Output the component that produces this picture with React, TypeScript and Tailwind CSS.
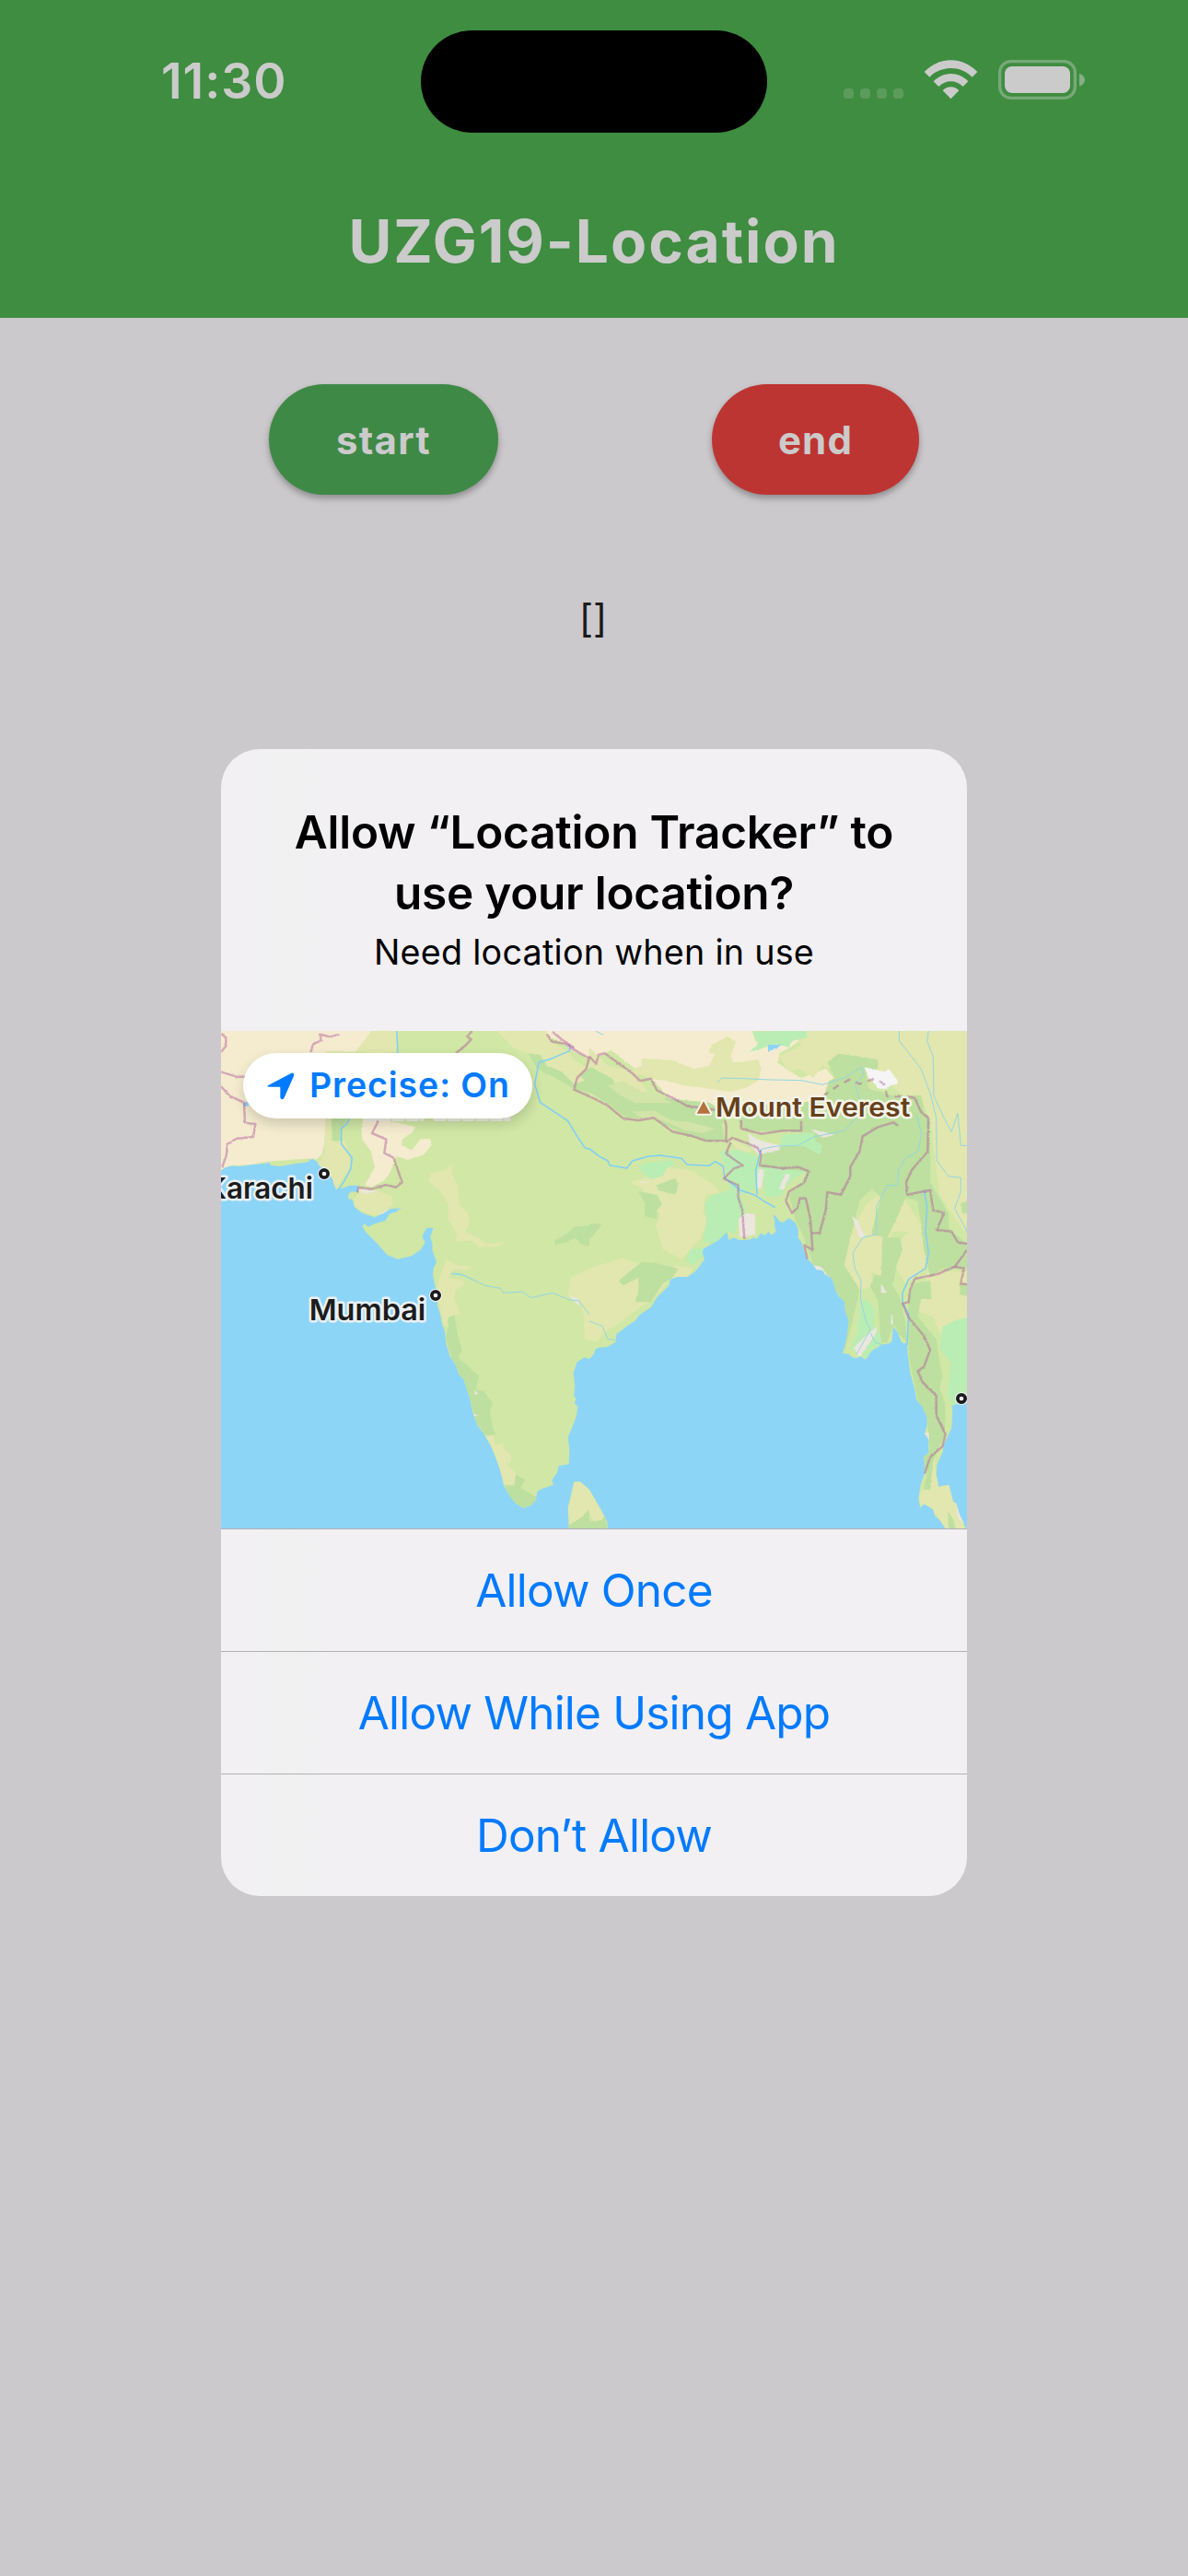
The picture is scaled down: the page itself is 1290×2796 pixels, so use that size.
const LAND =
  "30,20 30,482 42,472 65,466 90,468 130,462 180,458 185,452 192,464 220,468 270,460 315,454 318,446 330,444 342,452 350,465 380,490 395,512 397,525 405,543 430,538 450,530 478,530 474,552 452,550 445,560 444,574 458,576 465,600 490,620 530,634 560,620 582,606 618,604 596,618 580,622 565,645 530,655 510,665 498,655 490,662 500,680 540,720 570,755 605,770 650,760 680,740 695,715 686,700 688,690 700,668 722,668 716,684 712,700 718,716 718,740 725,760 732,780 722,800 720,820 725,850 735,885 735,920 744,950 750,980 760,1010 762,1040 775,1085 795,1115 805,1145 820,1160 830,1190 840,1220 850,1270 865,1310 890,1345 910,1380 930,1430 943,1470 950,1505 970,1540 990,1565 1015,1580 1040,1572 1055,1556 1060,1528 1070,1520 1090,1513 1113,1505 1108,1490 1125,1465 1130,1443 1163,1438 1165,1390 1160,1350 1175,1315 1188,1280 1192,1250 1182,1240 1186,1225 1180,1215 1183,1180 1178,1140 1190,1105 1215,1090 1230,1095 1244,1080 1250,1063 1260,1058 1290,1055 1315,1040 1318,1015 1350,990 1380,970 1395,950 1430,928 1450,895 1490,855 1493,835 1515,828 1550,828 1575,810 1590,792 1605,770 1598,750 1602,735 1620,726 1650,708 1678,682 1684,708 1700,700 1718,708 1730,708 1755,706 1765,700 1775,704 1790,685 1800,694 1814,680 1822,692 1838,680 1832,655 1835,650 1828,625 1835,628 1850,648 1862,650 1880,636 1900,650 1910,672 1910,700 1922,718 1930,745 1940,770 1952,780 1970,804 1990,806 1998,820 2018,830 2025,845 2032,870 2045,895 2060,905 2064,940 2075,970 2072,1000 2068,1030 2055,1078 2072,1078 2086,1090 2100,1093 2112,1086 2130,1097 2150,1068 2185,1048 2205,1045 2215,1038 2220,990 2235,1010 2244,1035 2250,1043 2265,1045 2267,1080 2275,1140 2290,1195 2296,1230 2315,1250 2330,1285 2330,1310 2322,1340 2335,1355 2335,1400 2318,1416 2322,1430 2322,1470 2310,1500 2302,1550 2308,1580 2320,1567 2350,1585 2356,1607 2370,1618 2392,1650 2458,1650 2445,1620 2435,1600 2425,1565 2415,1560 2410,1540 2402,1505 2380,1508 2368,1512 2360,1470 2362,1440 2382,1395 2384,1375 2400,1340 2410,1320 2413,1260 2410,1248 2430,1240 2462,1240 2462,20";

const CREAM = [
  "20,20 560,20 530,70 490,92 430,96 375,100 372,320 368,390 358,430 340,446 330,442 180,452 130,462 65,466 42,474 20,486",
  "495,300 665,340 650,360 620,380 618,400 650,415 680,380 712,378 716,400 690,430 640,446 600,435 580,490 560,515 520,535 498,530 530,470 520,420 490,380 487,350",
  "1090,20 1760,20 1770,60 1850,70 1890,60 1940,20 1942,30 1900,70 1850,100 1842,130 1870,150 1920,180 2000,150 2035,190 2020,220 1960,275 1820,290 1600,270 1500,256 1440,190 1380,150 1300,90 1240,120 1170,90 1140,62 1092,45",
];

const YELLOW = [
  "525,20 610,20 600,92 545,102 470,92",
  "370,92 430,92 400,120 372,120",
  "372,310 400,310 392,390 436,384 448,440 450,470 430,500 408,540 392,515 345,462 370,420 366,380",
  "930,27 1090,27 1100,60 1160,92 1180,120 1225,150 1228,180 1190,200 1150,190 1092,150 1088,128 1070,110 1025,100 980,80",
  "760,480 785,455 782,490 800,530 806,590 835,620 840,650 826,680 866,700 900,720 960,714 930,730 870,732 846,710 790,712 800,690 770,640 770,590 740,545 704,515 715,490",
  "480,540 530,545 560,555 588,565 592,590 570,610 530,630 490,615 465,600 462,575 478,556",
  "765,770 800,790 850,794 830,806 790,800 770,830 822,840 818,858 795,870 790,900 810,950 775,955 770,990 754,985 738,900 736,850 745,820",
  "1170,830 1230,800 1340,765 1400,790 1420,830 1510,790 1570,800 1545,830 1490,838 1440,900 1390,930 1320,985 1290,1000 1250,1040 1215,1030 1212,960 1200,900 1160,885",
  "1360,520 1430,500 1480,470 1560,480 1590,500 1640,530 1655,556 1610,560 1600,620 1620,640 1600,680 1595,700 1530,770 1470,740 1446,660 1460,620 1430,600 1400,540",
  "890,1345 917,1345 924,1375 950,1370 948,1386 976,1410 974,1430 960,1436 993,1470 990,1505 955,1505 940,1460 920,1400",
  "1370,150 1400,140 1400,116 1500,122 1570,150 1620,140 1640,100 1616,100 1630,72 1680,44 1708,62 1690,110 1700,130 1780,120 1790,150 1780,190 1740,212 1690,225 1600,212 1540,205 1480,190 1430,182 1380,165",
  "1846,110 1920,75 1910,50 1950,20 2470,20 2470,620 2450,680 2370,560 2340,320 2310,240 2260,240 2150,160 2020,150 1990,140 1960,180 1915,150 1880,160",
  "2040,440 2060,420 2085,420 2080,460 2040,540 2030,640 2010,655 2000,625 2010,550",
  "2210,530 2190,610 2200,590 2260,580 2300,640 2290,680 2220,680 2190,740 2190,850 2215,920 2175,830 2150,810 2150,860 2110,870 2060,790 2070,710 2130,590",
  "2250,700 2320,630 2330,800 2260,850 2230,800",
  "2330,810 2460,810 2460,1010 2380,1030 2350,960 2300,940 2320,880",
  "2360,1480 2400,1500 2410,1540 2430,1570 2440,1600 2450,1650 2390,1650 2350,1590 2310,1570 2304,1540 2330,1490 2352,1400",
  "1230,80 1290,140 1380,160 1420,230 1380,240 1330,215 1260,170 1225,150",
  "1685,380 1760,410 1750,430 1710,410",
  "1180,1495 1200,1495 1230,1520 1250,1555 1270,1590 1280,1610 1265,1625 1240,1620 1228,1590 1200,1615 1165,1640 1160,1580 1170,1540",
];

const FOREST = [
  "390,312 442,312 422,350 424,384 392,384",
  "1030,100 1070,105 1090,140 1140,160 1180,200 1215,190 1200,170 1235,145 1300,180 1330,215 1380,230 1440,240 1510,250 1620,260 1690,300 1660,330 1670,380 1620,388 1560,370 1490,340 1430,310 1350,310 1300,270 1240,230 1180,215 1120,180 1060,150",
  "1740,270 1920,260 1990,250 2010,190 2030,180 2005,130 2040,102 2110,110 2170,120 2170,150 2130,170 2140,215 2230,240 2310,236 2320,290 2340,320 2340,520 2400,620 2400,670 2460,720 2460,800 2380,800 2340,830 2320,740 2300,580 2260,570 2220,660 2180,740 2190,700 2150,690 2160,640 2180,570 2150,540 2110,580 2080,700 2060,790 2110,870 2090,960 2060,1075 2070,960 2040,880 1960,790 1930,700 1900,640 1880,560 1920,520 1940,490 1790,470 1800,410 1900,400 1960,360 1880,355 1740,350 1715,320",
  "2080,420 2060,500 2060,560 2010,550 2000,640 1960,700 1990,720 2050,640 2100,500",
  "1390,550 1450,560 1466,590 1450,610 1450,640 1410,630 1412,590",
  "1446,530 1510,506 1520,530 1510,560 1456,546",
  "1400,780 1450,784 1520,802 1500,830 1470,850 1430,910 1400,910 1380,910 1390,870 1390,830 1340,856 1325,840",
  "1115,710 1160,685 1180,665 1230,660 1230,730 1200,720 1185,700 1150,716 1120,722",
  "1230,655 1270,655 1245,690 1230,705",
  "768,1000 770,960 790,955 800,1010 815,1070 802,1090 870,1150 860,1195 885,1200 915,1240 905,1260 915,1320 925,1340 890,1345 860,1300 845,1240 810,1150 780,1090 762,1030",
  "955,1505 985,1508 990,1470 1020,1490 1005,1516 1050,1540 1060,1550 1040,1572 1015,1580 990,1565 965,1535",
  "2160,820 2200,830 2240,890 2260,980 2265,1040 2235,1010 2222,980 2200,1040 2180,1045 2170,900 2145,860",
  "2185,700 2240,700 2250,740 2230,790 2220,850 2180,850",
  "2290,850 2340,840 2345,900 2310,900 2300,960 2360,1030 2370,1100 2380,1150 2370,1190 2390,1240 2388,1340 2360,1400 2350,1430 2340,1520 2318,1520 2330,1470 2318,1416 2340,1390 2330,1290 2300,1230 2270,1080 2268,900",
  "2436,850 2460,850 2460,890 2436,886",
  "1163,1636 1200,1615 1228,1588 1232,1650 1163,1650",
  "1230,1625 1270,1620 1280,1608 1290,1650 1230,1650",
  "2398,1590 2416,1620 2425,1650 2400,1650",
  "2440,590 2460,580 2460,620 2445,620",
];

const HILLS = [
  "1290,205 1340,190 1400,225 1460,240 1500,262 1440,262 1380,262 1330,236",
  "1370,290 1440,286 1500,318 1560,325 1640,345 1600,360 1540,350 1470,320 1400,312",
];

const MINT = [
  "1760,30 1940,25 1935,50 1890,60 1880,80 1840,70 1750,96 1780,70",
  "1390,470 1420,455 1500,448 1505,462 1480,478 1470,498 1430,510 1405,490",
  "1655,420 1720,415 1770,430 1790,470 1780,540 1720,560 1740,610 1700,690 1680,680 1640,720 1600,710 1612,640 1605,590 1630,560 1690,545 1680,490",
  "1795,470 1870,478 1940,485 1900,505 1870,530 1855,565 1800,568",
  "1855,365 1960,358 1965,385 1990,400 1980,430 1960,420 1930,402 1855,402",
  "1558,740 1600,732 1600,760 1570,790 1545,775",
  "2115,905 2140,905 2160,940 2158,990 2180,1020 2180,1055 2150,1060 2135,1095 2120,1085 2080,1060 2100,1020",
  "2380,990 2420,970 2460,960 2460,1240 2415,1250 2395,1210 2410,1110 2370,1060",
];

const SAND = [
  "470,540 540,548 500,558",
  "540,625 575,608 615,604 590,620",
  "1746,360 1790,385 1850,400 1850,415 1780,430 1755,400",
  "1780,475 1800,480 1790,540 1775,540",
  "1870,490 1885,495 1860,545 1848,540",
  "1715,640 1740,620 1770,625 1770,690 1720,700",
  "1950,346 2030,365 1990,375",
  "1960,790 1985,795 2020,840 1980,825",
  "2090,1060 2130,1020 2165,990 2165,1010 2110,1090",
  "1395,517 1440,518 1400,522",
  "2085,630 2100,640 2130,700 2110,700",
  "2180,850 2200,880 2180,880",
  "2322,1335 2336,1335 2336,1360",
  "2425,1565 2440,1590 2452,1635 2430,1610",
  "2215,940 2220,980 2212,985",
  "1180,1470 1210,1495 1190,1490",
  "855,1195 868,1210 858,1212",
  "850,1275 875,1279 855,1282",
  "1160,885 1195,900 1198,925",
];

const BORDERS = [
  "30,34 46,50 46,76 30,96",
  "415,38 385,46 352,38 356,58 330,70 322,96",
  "848,27 832,45 845,55 825,75 795,100",
  "30,160 80,176 108,176",
  "30,208 60,240 105,260 108,326 142,330 135,372 80,378 50,396 48,430 34,470",
  "545,315 522,360 568,380 562,425 592,440 620,520 600,536 568,528 520,542 478,536 474,553",
  "1092,38 1110,62 1150,68 1200,100 1230,115 1220,150 1190,180 1180,218 1230,240",
  "1110,30 1140,55 1180,82",
  "1230,110 1252,134 1260,104 1280,100 1330,136 1370,165 1396,190 1430,182 1450,220 1500,245 1550,272 1580,275 1640,284",
  "1230,240 1290,270 1340,312 1390,318 1440,310 1500,355 1560,368 1610,385 1675,385 1676,340 1672,318",
  "1724,318 1725,345 1790,362 1860,352 1920,352 1920,320",
  "1675,390 1695,375 1750,395 1778,408 1790,430 1785,465 1860,474 1910,470 1945,485 1930,520 1880,550 1870,580 1890,620 1910,600 1915,572 1935,572 1950,640 1957,740 1930,725 1940,770",
  "1690,390 1675,425 1700,445 1730,465 1700,475 1668,508 1715,530 1715,570 1728,610 1735,705",
  "1955,685 1980,685 2000,610 2005,552 2050,560 2080,500 2080,470 2110,420 2120,370 2170,340 2220,325 2235,335",
  "2265,240 2290,245 2310,290 2334,310 2332,420 2280,480 2262,520 2265,560 2340,545 2350,610 2385,620 2362,675 2410,680 2430,715 2460,720",
  "2460,740 2420,795 2360,820 2290,834 2275,870 2270,910 2250,915 2270,960 2320,1020 2340,1065 2320,1120 2300,1135 2315,1170 2360,1215 2360,1280 2390,1340 2380,1380 2340,1415 2322,1468",
  "2420,795 2450,800 2440,850 2460,852",
];

const DASHED = "1990,240 2040,205 2080,184 2110,200 2160,182 2190,200 2200,240 2260,240";

const RIVERS = [
  "602,20 606,100",
  "448,312 440,330 422,345 422,395 457,440 452,478 430,518 412,545",
  "1165,70 1165,92 1110,116 1065,130 1052,200 1070,260 1160,320 1190,370 1216,408 1232,412 1260,434 1290,450 1296,464 1352,474 1370,450 1420,436 1460,432 1530,442 1548,462 1620,466 1640,452 1666,468 1670,505 1720,545 1770,562 1800,582 1835,602",
  "1790,412 1782,440 1772,480 1776,560",
  "2320,545 2330,600 2325,680 2335,750 2325,800 2270,835 2250,880 2250,910 2270,950 2265,1050",
];

const STREAMS = [
  "1790,412 1840,402 1910,400 1960,372 2060,352 2100,310 2110,250 2095,200 2125,170 2115,145 2060,180 1990,202 1920,188 1820,186 1730,182 1660,180 1648,195",
  "2238,20 2240,60 2310,150 2340,230 2360,310 2362,450 2400,500 2440,505 2440,550 2420,605 2460,680",
  "2335,27 2330,60 2350,110 2352,240 2390,320 2410,355 2430,295 2440,400 2460,400",
  "2295,300 2312,360 2300,420 2262,440 2236,480 2235,530 2200,530 2165,600 2164,690 2120,700 2088,750 2095,800 2115,840 2113,900 2130,970 2145,1000 2100,1080",
  "2145,1010 2160,1040 2185,1050",
  "780,816 810,818 890,856 940,865 950,880 1010,876 1040,896 1110,880 1165,903 1195,905 1230,950",
  "1230,972 1272,988 1290,1030 1312,1033",
  "780,818 820,822 855,840",
  "1250,27 1275,40",
];

function Shapes({ list, fill }: { list: string[]; fill: string }) {
  return (
    <g fill={fill}>
      {list.map((points) => (
        <polygon key={points} points={points} />
      ))}
    </g>
  );
}

function Lines({ list }: { list: string[] }) {
  return (
    <>
      {list.map((points) => (
        <polyline key={points} points={points} />
      ))}
    </>
  );
}

function CityDot({ x, y }: { x: number; y: number }) {
  return (
    <g>
      <circle cx={x} cy={y} r="21" fill="#f4f7f5" />
      <circle cx={x} cy={y} r="12.5" fill="#fff" stroke="#1c1c1e" strokeWidth="11" />
    </g>
  );
}

function MapView() {
  const label = {
    fontFamily: "Inter, sans-serif",
    paintOrder: "stroke" as const,
    strokeLinejoin: "round" as const,
  };
  return (
    <svg className="block h-full w-full" viewBox="30 27 2430 1620" preserveAspectRatio="none">
      <defs>
        <filter id="rough" x="-2%" y="-2%" width="104%" height="104%">
          <feTurbulence type="fractalNoise" baseFrequency="0.12" numOctaves="2" seed="4" />
          <feDisplacementMap in="SourceGraphic" scale="7" xChannelSelector="R" yChannelSelector="G" />
        </filter>
        <clipPath id="land">
          <polygon points={LAND} />
          <polygon points="1163,1650 1160,1580 1170,1540 1180,1495 1200,1495 1230,1520 1250,1555 1270,1590 1288,1625 1290,1650" />
        </clipPath>
      </defs>
      <rect x="0" y="0" width="2500" height="1700" fill="#8dd5f7" />
      <g clipPath="url(#land)">
        <rect x="0" y="0" width="2500" height="1700" fill="#d0e7a5" />
        <g filter="url(#rough)">
          <Shapes list={CREAM} fill="#f5ecd0" />
          <Shapes list={YELLOW} fill="#e1e7ae" />
          <Shapes list={FOREST} fill="#bddf9f" />
          <Shapes list={HILLS} fill="#d3e4a8" />
          <Shapes list={MINT} fill="#baedb3" />
          <Shapes list={SAND} fill="#ebe6de" />
          <polygon fill="#f5f5f6" points="2125,145 2160,152 2190,160 2205,150 2235,190 2232,200 2210,205 2200,215 2170,215 2160,200 2140,180" />
          <polygon fill="#8dd5f7" points="1812,72 1840,72 1858,70 1840,85 1812,93" />
          <polygon fill="#8dd5f7" points="104,262 120,258 122,270 106,274" />
        </g>
      </g>
      <g fill="none" strokeLinejoin="round">
        <g stroke="#7fcff8" strokeWidth="4.5">
          <Lines list={RIVERS} />
        </g>
        <g stroke="#95d6e4" strokeWidth="3">
          <Lines list={STREAMS} />
        </g>
      </g>
      <g filter="url(#rough)" fill="none" stroke="#b1609a" strokeOpacity="0.48" strokeWidth="7.5" strokeLinejoin="round">
        <Lines list={BORDERS} />
        <polyline points={DASHED} strokeDasharray="22 20" />
      </g>
      <path d="M500 314H686M728 314H968" stroke="#ebefe3" strokeWidth="14" strokeLinecap="round" strokeDasharray="30 16" />
      <g style={label} stroke="#e9f1f3" strokeWidth="15" fill="#1c1c1e" fontSize="95" fontWeight="600">
        <text x="-18" y="573" textLength="348" lengthAdjust="spacingAndGlyphs">Karachi</text>
        <text x="317" y="970" textLength="380" lengthAdjust="spacingAndGlyphs">Mumbai</text>
      </g>
      <text style={label} x="1641" y="307" textLength="634" lengthAdjust="spacingAndGlyphs" fontSize="85" fontWeight="600" fill="#65401c" stroke="#f3f3e6" strokeWidth="15">
        Mount Everest
      </text>
      <path d="M1602 256L1624 296H1580Z" fill="#b5713f" stroke="#f8f4ea" strokeWidth="12" strokeLinejoin="round" style={{ paintOrder: "stroke" }} />
      <CityDot x={366} y={492} />
      <CityDot x={729} y={888} />
      <CityDot x={2442} y={1224} />
    </svg>
  );
}

function StatusIcons() {
  return (
    <svg className="h-[50px] w-[270px]" viewBox="150 60 810 150">
      <g fill="#5b9c5d">
        <rect x="168" y="168" width="33" height="33" rx="11" />
        <rect x="222" y="168" width="33" height="33" rx="11" />
        <rect x="276" y="168" width="33" height="33" rx="11" />
        <rect x="330" y="168" width="33" height="33" rx="11" />
      </g>
      <g fill="#cbcbcb">
        <path d="M431 114C480 63 555 63 604 114L587 131C549 92 486 92 448 131Z" />
        <path d="M461 145C492 112 543 112 574 145L557 162C535 139 500 139 478 162Z" />
        <path d="M491 175C506 159 529 159 544 175L517.500 202Z" />
        <rect x="693" y="96" width="213" height="87" rx="24" />
      </g>
      <rect x="677" y="80" width="245" height="119" rx="36" fill="none" stroke="#77a978" strokeWidth="10" />
      <path d="M936 119Q954 126 954 140Q954 154 936 161Z" fill="#85ae85" />
    </svg>
  );
}

function PillButton({ label, className }: { label: string; className: string }) {
  return (
    <button
      className={`h-[120px] rounded-full text-[42px] font-bold tracking-[1.2px] text-[#cccacb] shadow-[0_4px_7px_rgba(0,0,0,0.3)] ${className}`}
    >
      {label}
    </button>
  );
}

const ACTIONS = ["Allow Once", "Allow While Using App", "Don’t Allow"];

export default function App() {
  return (
    <div className="relative h-[2796px] w-[1290px] overflow-hidden bg-[#cbc9cc] font-['Inter',sans-serif]">
      <header className="h-[345px] bg-[#3f8d40] text-[#cbcbcb]">
        <div className="flex h-[177px] items-start">
          <div className="mt-[58px] w-[457px] pl-[175px] text-[53.500px] leading-[60px] font-semibold tracking-[1px]">11:30</div>
          <div className="mt-[33px] h-[111px] w-[376px] rounded-full bg-black" />
          <div className="mt-[60px] ml-[77px]">
            <StatusIcons />
          </div>
        </div>
        <h1 className="text-center text-[64px] leading-[169px] font-bold tracking-[2px]">UZG19-Location</h1>
      </header>

      <main>
        <div className="flex gap-[232px] pt-[72px] pl-[292px]">
          <PillButton label="start" className="w-[249px] bg-[#3f8946]" />
          <PillButton label="end" className="w-[225px] bg-[#bd3532]" />
        </div>
        <p className="mt-[104px] pr-[2px] text-center text-[42px] leading-[60px] text-[#1b1a1d]">[]</p>
      </main>

      <div className="absolute inset-0 flex items-start justify-center pt-[813px]">
        <section className="w-[810px] overflow-hidden rounded-[42px] bg-[linear-gradient(90deg,#f2f0f3_4%,#f0f1f0_9%,#f2f0f3_15%)]">
          <div className="h-[306px] pt-[57px] text-center text-black">
            <h2 className="text-[49.500px] leading-[66px] font-semibold tracking-[-0.25px]">
              Allow “Location Tracker” to
              <br />
              use your location?
            </h2>
            <p className="mt-[7px] text-[37.700px] leading-[48px] tracking-[0.25px]">Need location when in use</p>
          </div>
          <div className="relative h-[540px]">
            <MapView />
            <button className="absolute top-[24px] left-[24px] flex h-[71px] w-[314px] items-center rounded-full bg-white pl-[26px] text-[37.500px] font-semibold tracking-[0.9px] whitespace-nowrap text-[#007aff] shadow-[0_6px_14px_rgba(0,0,0,0.16)]">
              <svg className="mr-[16px] h-[30px] w-[30px]" viewBox="0 0 90 90">
                <path d="M4 42L78 3Q90 -2 87 12L55 84Q47 92 43 82V50Q43 47 40 47H8Q-3 46 4 42Z" fill="#007aff" />
              </svg>
              Precise: On
            </button>
          </div>
          {ACTIONS.map((action) => (
            <button
              key={action}
              className="block h-[133px] w-full border-t border-[#b1b0b4] pt-px text-[49.500px] tracking-[-0.8px] text-[#007aff]"
            >
              {action}
            </button>
          ))}
        </section>
      </div>
    </div>
  );
}
